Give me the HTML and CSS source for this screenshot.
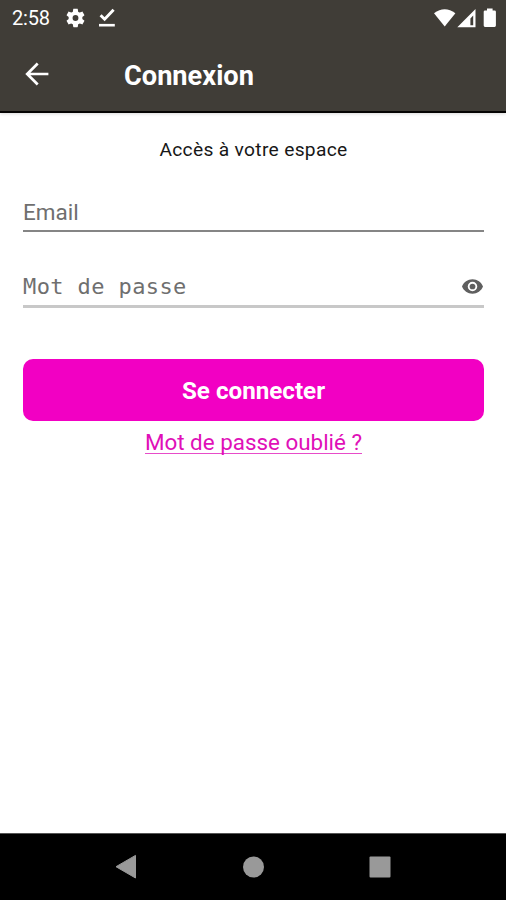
FILE: index.html
```html
<!DOCTYPE html>
<html lang="fr">
<head>
<meta charset="utf-8">
<title>Connexion</title>
<link rel="stylesheet" href="styles.css">
</head>
<body>
<header class="top">
  <div class="status">
    <span class="time">2:58</span>
    <svg class="gear" width="23" height="22" viewBox="0 0 24 24" fill="#fff"><path fill-rule="evenodd" d="M19.43 12.98c.04-.32.07-.64.07-.98s-.03-.66-.07-.98l2.11-1.65c.19-.15.24-.42.12-.64l-2-3.46c-.12-.22-.39-.3-.61-.22l-2.49 1c-.52-.4-1.08-.73-1.69-.98l-.38-2.65C14.46 2.18 14.25 2 14 2h-4c-.25 0-.46.18-.49.42l-.38 2.65c-.61.25-1.17.59-1.69.98l-2.49-1c-.23-.09-.49 0-.61.22l-2 3.46c-.13.22-.07.49.12.64l2.11 1.65c-.04.32-.07.65-.07.98s.03.66.07.98l-2.11 1.65c-.19.15-.24.42-.12.64l2 3.46c.12.22.39.3.61.22l2.49-1c.52.4 1.08.73 1.69.98l.38 2.65c.03.24.24.42.49.42h4c.25 0 .46-.18.49-.42l.38-2.65c.61-.25 1.17-.59 1.69-.98l2.49 1c.23.09.49 0 .61-.22l2-3.46c.12-.22.07-.49-.12-.64l-2.11-1.65zM12 15.2a3.2 3.2 0 1 1 0-6.4 3.2 3.2 0 0 1 0 6.4z"/></svg>
    <svg class="done" width="18" height="20" viewBox="0 0 18 20" fill="none" stroke="#fff"><path d="M2.600 7.200l4 4L15.600 1.700" stroke-width="2.900"/><path d="M1 17.200h15.800" stroke-width="2.600"/></svg>
    <svg class="signals" width="64" height="22" viewBox="0 0 64 22" fill="#fff"><path d="M1 6.200Q11.700-1.600 22.400 6.200L11.700 19.600z"/><path fill-rule="evenodd" d="M42.500 2V20.200H24.300zM40.200 8.500l-2.800 3v6.700h2.800z"/><path d="M54 1.500h5.600v2h2q1.300 0 1.300 1.300v13.700q0 1.400-1.300 1.400H52q-1.300 0-1.300-1.400V4.800q0-1.300 1.300-1.300h2z"/></svg>
  </div>
  <div class="bar">
    <svg class="back" width="24" height="24" viewBox="0 0 24 24" fill="none" stroke="#fff" stroke-width="2.700"><path d="M23.400 12H2.400M12.700 1.500L2.200 12l10.500 10.500"/></svg>
    <h1>Connexion</h1>
  </div>
</header>
<main>
  <p class="intro">Accès à votre espace</p>
  <div class="field email"><span>Email</span></div>
  <div class="field password">
    <span>Mot de passe</span>
    <svg class="eye" width="21" height="15" viewBox="0 0 22 15" fill="#5f5f5f"><path fill-rule="evenodd" d="M11 0C6 0 1.700 3.100 0 7.500 1.700 11.900 6 15 11 15s9.300-3.100 11-7.500C20.300 3.100 16 0 11 0zM11 12.500a5 5 0 1 1 0-10 5 5 0 0 1 0 10z"/><circle cx="11" cy="7.500" r="3"/></svg>
  </div>
  <button class="submit">Se connecter</button>
  <a class="forgot"><span>Mot de passe oublié ?</span></a>
</main>
<nav>
  <svg width="22" height="26" viewBox="0 0 22 26"><path d="M20.500 1.400V24L1 12.700z" fill="#999" stroke="#999" stroke-linejoin="round"/></svg>
  <svg width="22" height="22" viewBox="0 0 22 22"><circle cx="11.500" cy="11" r="10.500" fill="#999"/></svg>
  <svg width="22" height="22" viewBox="0 0 22 22"><rect x=".5" y=".5" width="21" height="21" rx="1" fill="#999"/></svg>
</nav>
</body>
</html>
```
FILE: styles.css
```css
* { box-sizing: border-box; }
body {
  margin: 0;
  height: 900px;
  display: flex;
  flex-direction: column;
  background: #fff;
  font-family: Roboto, "Liberation Sans", sans-serif;
  overflow: hidden;
}
svg { display: block; flex: none; }
.top {
  height: 113px;
  background: #403d37;
  border-bottom: 2px solid #050403;
  color: #fff;
  box-shadow: 0 1px 3px rgba(0, 0, 0, .15);
}
.status {
  height: 36px;
  display: flex;
  align-items: center;
  padding: 0 9px 0 12px;
}
.time { width: 52px; font-size: 20px; letter-spacing: -.2px; }
.done { margin-left: 11px; }
.signals { margin-left: auto; }
.bar {
  height: 77px;
  display: flex;
  align-items: center;
  padding: 0 0 2px 25px;
}
h1 {
  margin: 5px 0 0 75px;
  font-size: 27.2px;
  line-height: 32px;
  font-weight: 700;
}
main {
  flex: 1;
  display: flex;
  flex-direction: column;
  padding: 24px 22px 0 23px;
}
.intro {
  margin: 0;
  text-align: center;
  font-size: 19.2px;
  line-height: 26px;
  letter-spacing: .32px;
  color: #171717;
}
.field {
  display: flex;
  justify-content: space-between;
  align-items: center;
  color: #6f6f6f;
}
.email {
  height: 39px;
  margin-top: 30px;
  border-bottom: 2px solid #858585;
  font-size: 22.5px;
}
.password {
  height: 42px;
  margin-top: 34px;
  padding-top: 2px;
  border-bottom: 3px solid #c8c8c8;
  font-family: "DejaVu Sans Mono", monospace;
  font-size: 22px;
  letter-spacing: .4px;
}
.eye { margin-right: 1px; }
.submit {
  height: 62px;
  margin: 51px 0 0;
  padding: 2px 0 0;
  border: 0;
  border-radius: 10px;
  background: #f200c3;
  color: #fff;
  font: 700 24.2px/30px Roboto, sans-serif;
}
.forgot {
  margin-top: 7px;
  text-align: center;
  font-size: 22.4px;
  line-height: 29px;
  color: #e010b8;
}
.forgot span { display: inline-block; height: 26px; border-bottom: 1px solid #e74cc9; }
nav {
  height: 67px;
  border-top: 1px solid #555;
  background: #000;
  display: flex;
  justify-content: space-between;
  align-items: center;
  padding: 0 115px;
}
```
